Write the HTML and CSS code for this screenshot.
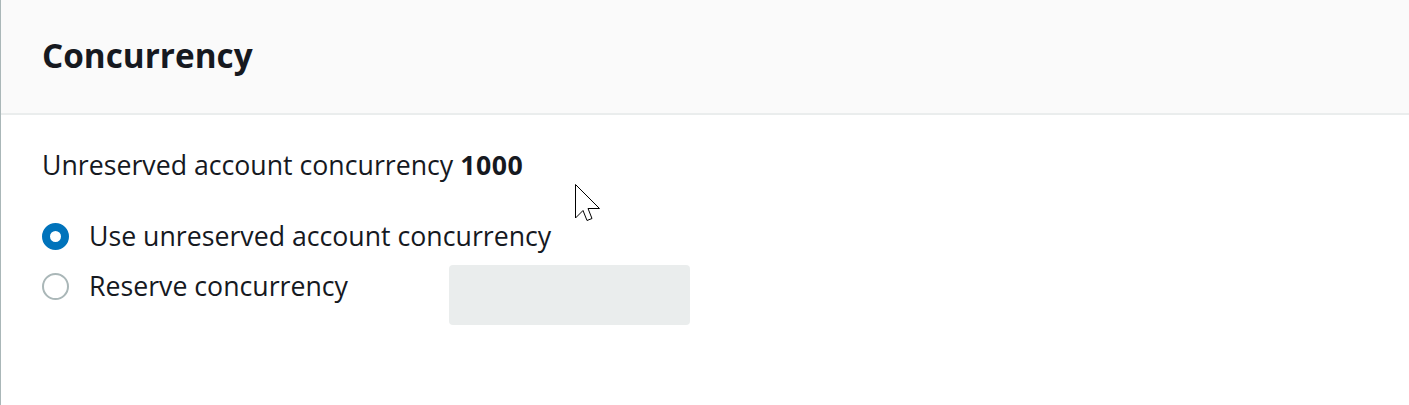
FILE: index.html
```html
<!DOCTYPE html>
<html>
<head>
<meta charset="utf-8">
<link rel="stylesheet" href="styles.css">
</head>
<body>
<div class="panel">
  <div class="panel-header">
    <h2 class="title">Concurrency</h2>
  </div>
  <div class="panel-body">
    <p class="summary">Unreserved account concurrency <b>1000</b></p>
    <div class="options">
      <label class="option">
        <span class="radio radio-checked"></span>
        <span class="option-label">Use unreserved account concurrency</span>
      </label>
      <div class="option-row">
        <label class="option">
          <span class="radio"></span>
          <span class="option-label">Reserve concurrency</span>
        </label>
        <div class="disabled-input"></div>
      </div>
    </div>
    <svg class="cursor" width="27" height="39" viewBox="0 0 27 39">
      <path d="M0.5 0.5 L0.5 34 L8 26.5 L12 36.5 L17 34.5 L13 24.5 L24.5 24.5 Z" fill="#fff" stroke="#000" stroke-width="1" stroke-linejoin="miter"/>
    </svg>
  </div>
</div>
</body>
</html>
```
FILE: styles.css
```css
html, body {
  margin: 0;
  padding: 0;
  background: #ffffff;
}
body {
  font-family: "Open Sans", "Noto Sans", sans-serif;
  color: #16191f;
}
.panel {
  border-left: 1px solid #aab7b8;
  height: 405px;
  box-sizing: border-box;
}
.panel-header {
  background: #fafafa;
  height: 113px;
  border-bottom: 2px solid #eaeded;
  box-sizing: content-box;
  display: flex;
  align-items: center;
  padding-left: 41px;
}
.title {
  margin: 0;
  font-size: 33.3px;
  font-weight: 700;
  line-height: 40px;
  padding-bottom: 4px;
}
.panel-body {
  position: relative;
  padding: 34px 41px 0 41px;
}
.summary {
  margin: 0;
  font-size: 26.7px;
  line-height: 32px;
}
.summary b {
  font-weight: 700;
  letter-spacing: 0.5px;
}
.options {
  margin-top: 39px;
  display: flex;
  flex-direction: column;
  gap: 18px;
}
.option-row {
  display: flex;
  align-items: flex-start;
}
.option {
  display: flex;
  align-items: center;
  gap: 20px;
  height: 32px;
}
.option-label {
  font-size: 26.7px;
  line-height: 32px;
}
.radio {
  width: 27px;
  height: 27px;
  box-sizing: border-box;
  border-radius: 50%;
  border: 2px solid #aab7b8;
  background: #fff;
  flex: none;
}
.radio-checked {
  border: 8px solid #0073bb;
}
.disabled-input {
  margin-left: 101px;
  margin-top: -5px;
  width: 241px;
  height: 60px;
  background: #eaeded;
  border-radius: 4px;
}
.cursor {
  position: absolute;
  left: 574px;
  top: 69px;
}
```
